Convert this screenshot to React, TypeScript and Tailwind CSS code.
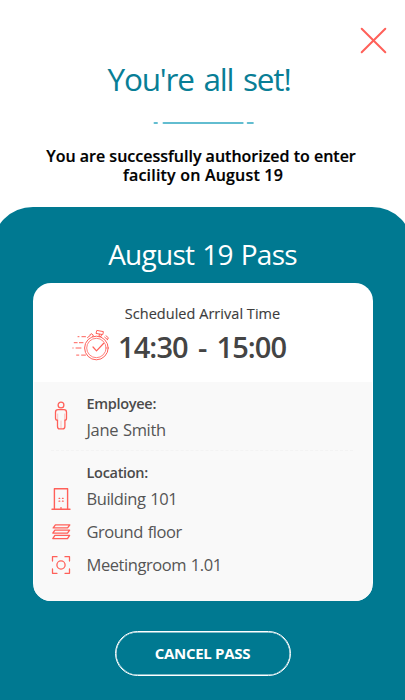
import type { ReactNode } from "react";

const stroke = {
  fill: "none",
  stroke: "#ff6059",
  strokeLinecap: "round" as const,
  strokeLinejoin: "round" as const,
};

function CloseIcon() {
  return (
    <svg width="27" height="27" viewBox="0 0 27 27" {...stroke} strokeWidth="2">
      <path d="M1.7 1.7 25.3 25.3M25.3 1.7 1.7 25.3" />
    </svg>
  );
}

function StopwatchIcon() {
  return (
    <svg className="overflow-visible" width="38" height="32" viewBox="0 0 38 32" {...stroke} strokeWidth="1">
      <circle cx="24.4" cy="18" r="11.8" />
      <circle cx="24.4" cy="18" r="9.7" strokeWidth=".8" />
      <path d="m21 17 3.5 3.8 7-7.3" strokeWidth="1.2" />
      <path d="m25.2.5 6.2 1.1-.6 3-6.4-1.1ZM27.4 4.2l-.4 2 2 .4.5-2M32.7 7.2l3 2.6M34 5.8l2.4 2-1 1.8M17.8 5l1.3-1.4 2.2 1.5-.6 1.5M15.5 7.6l2.8-2.2" />
      <path d="M6 6.7h1M9.9 6.7h3.6M2.2 12.7h3M7.4 12.7H11M.8 18h.4M4 18h5M4.6 25.1h2.2M9.6 25.1h3.9" />
    </svg>
  );
}

function PersonIcon() {
  return (
    <svg width="14" height="30" viewBox="0 0 14 30" {...stroke} strokeWidth="1.3">
      <circle cx="7" cy="4" r="2.9" />
      <path d="M4 8.7h6q2.5 0 2.5 2.5v6q0 2-1.6 2v6q0 2.7-2.2 2.7H5.5q-2 0-2-2.7v-6q-2 0-2-2v-6q0-2.5 2.5-2.5Z" />
      <path d="M3.7 13v6.2M10.7 13v6.2M7 20v7" strokeWidth=".35" />
    </svg>
  );
}

function BuildingIcon() {
  return (
    <svg width="20" height="24" viewBox="0 0 20 24" {...stroke} strokeWidth="1.4">
      <path d="M3.4 22V1.7h13.2V22M1 22.3h18" />
      <path d="M8 11.3h.8M11.4 11.3h.8M8 14.2h.8M11.4 14.2h.8" strokeWidth="1.2" />
      <path d="M10 20.6v.8" strokeWidth="1.3" />
    </svg>
  );
}

function LayersIcon() {
  return (
    <svg width="20" height="18" viewBox="0 0 20 18" {...stroke} strokeWidth="1.35">
      <path d="M4.4 1.9h14.4l-2.2 3H2.2ZM3.9 7.1h14.7l-2.1 3H1.8ZM3.9 12.4h14.7l-2.1 3.2H1.8Z" />
    </svg>
  );
}

function RoomIcon() {
  return (
    <svg width="20" height="20" viewBox="0 0 20 20" {...stroke} strokeWidth="1.3">
      <circle cx="10" cy="10" r="4.1" />
      <path d="M6 1.7H1.5V6M14 1.7h4.5V6M1.5 14v4.3H6M14 18.3h4.5V14" />
    </svg>
  );
}

function LocationRow({ icon, children }: { icon: ReactNode; children: ReactNode }) {
  return (
    <div className="flex h-[33px] items-center">
      <div className="flex w-[36px] shrink-0 justify-start">{icon}</div>
      <span className="whitespace-nowrap text-[16.5px] leading-6 tracking-[-0.44px] text-[#555] [word-spacing:1px]">{children}</span>
    </div>
  );
}

export default function App() {
  return (
    <main className="flex h-[700px] w-[405px] flex-col overflow-hidden bg-white font-['Open_Sans','Noto_Sans',sans-serif]">
      <header className="flex h-[206.5px] shrink-0 flex-col items-center">
        <div className="flex h-[54px] w-full items-end justify-end pr-[18px]">
          <button aria-label="Close"><CloseIcon /></button>
        </div>
        <h1 className="mr-[7px] mt-[5px] whitespace-nowrap text-[31.5px] leading-10 tracking-[-1.15px] text-[#087e96] [word-spacing:2.5px]">You're all set!</h1>
        <svg className="mt-[22px]" width="102" height="4" viewBox="0 0 102 4" fill="none" stroke="#62bdd0" strokeWidth="2.2" strokeLinecap="round">
          <path d="M2.6 2h2.3M11.6 2h79M95.8 2h5" />
        </svg>
        <div className="mt-[22px] flex flex-col items-center whitespace-nowrap text-[16px] font-semibold leading-[19px] text-black [-webkit-text-stroke:0.2px_black]">
          <p className="mr-[3px]">You are successfully authorized to enter</p>
          <p className="ml-[1px] tracking-[0.2px]">facility on August 19</p>
        </div>
      </header>
      <section className="-mx-2 flex flex-1 flex-col items-center rounded-t-[41px] bg-[#007991]">
        <h2 className="mt-[27.5px] whitespace-nowrap text-[28px] leading-10 tracking-[-0.75px] text-white [word-spacing:1.5px]">August 19 Pass</h2>
        <div className="mt-[9px] h-[318px] w-[340px] shrink-0 overflow-hidden rounded-[18px] bg-white">
          <div className="flex h-[99px] flex-col items-center">
            <p className="mt-[21px] whitespace-nowrap text-[14.5px] leading-5 tracking-[0.03px] text-[#3c3c3c] [-webkit-text-stroke:0.12px_#3c3c3c]">Scheduled Arrival Time</p>
            <div className="flex h-[46px] w-full items-center pl-[39px]">
              <div className="-mt-[3px]"><StopwatchIcon /></div>
              <span className="ml-[8.5px] whitespace-nowrap text-[29px] font-semibold leading-10 tracking-[-0.9px] text-[#444] [word-spacing:3.5px]">14:30 - 15:00</span>
            </div>
          </div>
          <div className="mx-px h-[219px] bg-[#f9f9f9] pl-[17px] pr-[19px]">
            <div className="flex h-[69px] items-center border-b border-dashed border-[#f3f3f3]">
              <div className="w-[36px] pl-[3px]"><PersonIcon /></div>
              <div className="pt-[2px]">
                <p className="whitespace-nowrap text-[14.5px] font-semibold leading-[26px] tracking-[-0.3px] text-[#4b4b4b]">Employee:</p>
                <p className="whitespace-nowrap text-[16.5px] leading-[26px] tracking-[-0.36px] text-[#555] [word-spacing:1px]">Jane Smith</p>
              </div>
            </div>
            <p className="ml-[36px] mt-[9px] h-[22px] whitespace-nowrap text-[14.5px] font-semibold leading-[26px] tracking-[-0.3px] text-[#4b4b4b]">Location:</p>
            <LocationRow icon={<BuildingIcon />}>Building 101</LocationRow>
            <LocationRow icon={<LayersIcon />}>Ground floor</LocationRow>
            <LocationRow icon={<RoomIcon />}>Meetingroom 1.01</LocationRow>
          </div>
        </div>
        <button className="mt-[30px] flex h-[45px] w-[176px] shrink-0 items-center justify-center whitespace-nowrap rounded-[23px] border border-white text-[15px] font-bold tracking-[-0.3px] text-white shadow-[inset_0_0_0_0.5px_white]">CANCEL PASS</button>
      </section>
    </main>
  );
}
